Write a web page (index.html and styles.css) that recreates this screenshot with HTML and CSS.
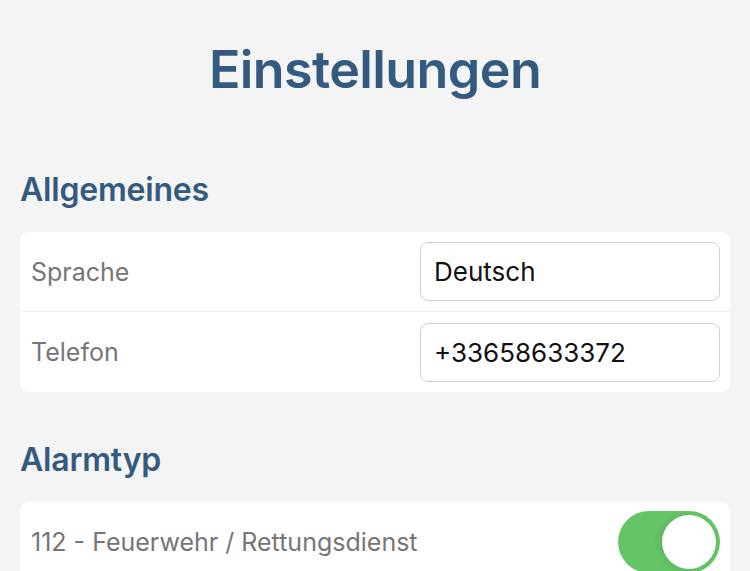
FILE: index.html
```html
<!DOCTYPE html>
<html lang="de">
<head>
<meta charset="utf-8">
<link rel="stylesheet" href="styles.css">
</head>
<body>
<div class="page">
  <h1 class="title">Einstellungen</h1>

  <h2 class="section">Allgemeines</h2>
  <div class="card">
    <div class="row">
      <span class="label">Sprache</span>
      <div class="field">Deutsch</div>
    </div>
    <div class="row">
      <span class="label">Telefon</span>
      <div class="field">+33658633372</div>
    </div>
  </div>

  <h2 class="section second">Alarmtyp</h2>
  <div class="card">
    <div class="row toggle-row">
      <span class="label">112 - Feuerwehr / Rettungsdienst</span>
      <div class="toggle"><div class="knob"></div></div>
    </div>
  </div>
</div>
</body>
</html>
```

FILE: styles.css
```css
html, body {
  margin: 0;
  padding: 0;
  background: #f4f4f4;
  font-family: Inter, Roboto, "Liberation Sans", sans-serif;
}
.page {
  padding: 0 20px;
  height: 571px;
  overflow: hidden;
}
.title {
  margin: 0;
  padding-top: 40px;
  height: 95px;
  text-align: center;
  font-size: 52px;
  font-weight: 600;
  color: #345a7f;
  line-height: 60px;
  letter-spacing: -0.6px;
}
.section {
  margin: 0 0 23px;
  padding-top: 36px;
  font-size: 32px;
  font-weight: 600;
  color: #345a7f;
  line-height: 38px;
  letter-spacing: -0.2px;
}
.section.second {
  padding-top: 49px;
}
.card {
  background: #fff;
  border-radius: 9px;
}
.row {
  display: flex;
  align-items: center;
  justify-content: space-between;
  height: 80px;
  padding: 0 10px 0 11px;
  border-bottom: 1px solid #efefef;
  box-sizing: border-box;
}
.row:last-child {
  border-bottom: none;
}
.label {
  font-size: 25px;
  color: #767676;
}
.field {
  width: 300px;
  height: 59px;
  box-sizing: border-box;
  border: 1px solid #cfcfcf;
  border-radius: 8px;
  padding: 0 13px;
  display: flex;
  align-items: center;
  font-size: 26px;
  color: #111;
}
.toggle {
  width: 102px;
  height: 62px;
  border-radius: 31px;
  background: #65c466;
  position: relative;
}
.knob {
  position: absolute;
  top: 4px;
  right: 4px;
  width: 54px;
  height: 54px;
  border-radius: 50%;
  background: #fff;
  box-shadow: -3px 0 6px rgba(0,0,0,0.08);
}
```
